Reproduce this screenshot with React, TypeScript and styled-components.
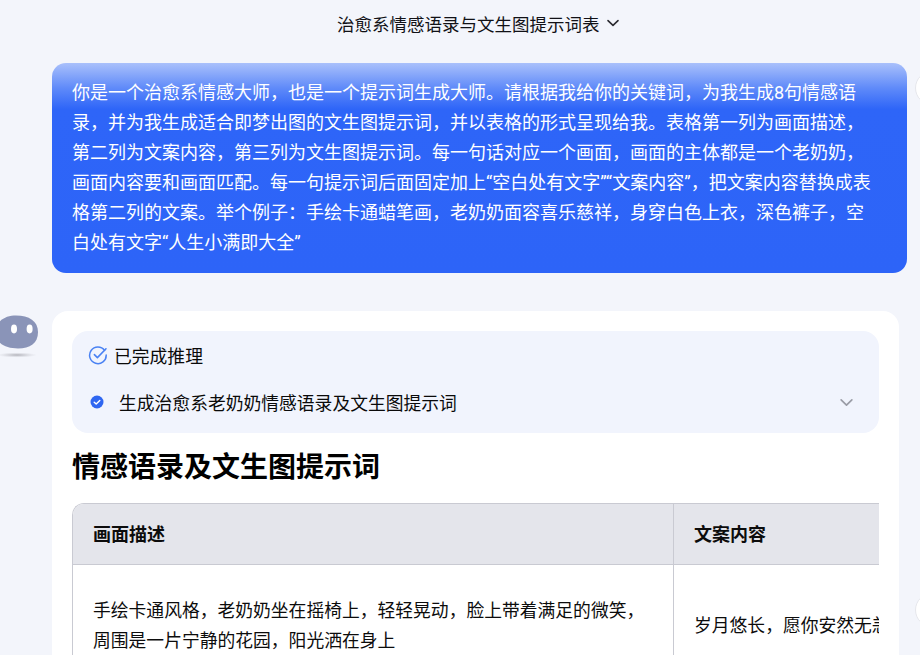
import React from "react";
import styled, { createGlobalStyle } from "styled-components";

const Global = createGlobalStyle`
  html, body { margin: 0; padding: 0; height: 100%; overflow: hidden; background: #f3f5fb; }
  body { font-family: "Liberation Sans", "Noto Sans CJK SC", sans-serif; color: #0a0a0a; }
`;

const Page = styled.div`
  width: 920px;
  height: 655px;
  overflow: hidden;
  position: relative;
  background: #f3f5fb;
`;
const TitleBar = styled.header`
  height: 50px;
  padding-left: 337px;
  display: flex;
  align-items: center;
  gap: 6px;
  font-size: 17.5px;
  color: #111116;
`;
const Title = styled.span`
  line-height: 50px;
`;
const TitleChevron = styled.span`
  display: flex;
  margin-top: -4px;
`;
const Bubble = styled.div`
  margin: 13px 13px 0 52px;
  padding: 15px 27px 15px 20px;
  height: 210px;
  box-sizing: border-box;
  border-radius: 14px;
  background: linear-gradient(180deg, #a9c0fb 0%, #5f8af9 12%, #2e65f8 22%, #2d64f8 100%);
  color: #fff;
  font-family: Roboto, "Noto Sans CJK SC", sans-serif;
  font-size: 18px;
  line-height: 30px;
`;
const Answer = styled.section`
  display: flex;
  margin-top: 38px;
`;
const AvatarCol = styled.div`
  width: 52px;
  flex: none;
  padding-top: 4px;
`;
const Card = styled.div`
  width: 847px;
  height: 400px;
  box-sizing: border-box;
  padding: 20px;
  background: #fff;
  border-radius: 16px;
`;
const Thinking = styled.div`
  height: 102px;
  box-sizing: border-box;
  background: #f1f4fd;
  border-radius: 16px;
  padding: 11px 16px 0 16px;
  font-size: 17.8px;
`;
const ThinkHead = styled.div`
  display: flex;
  align-items: center;
  gap: 6px;
  height: 26px;
  color: #0a0a0a;
`;
const ThinkRow = styled.div`
  display: flex;
  align-items: center;
  margin-top: 21px;
  height: 26px;
  padding-left: 2px;
  color: #0a0a0a;
`;
const ThinkText = styled.span`
  margin-left: 15px;
  flex: 1;
`;
const ChevronWrap = styled.span`
  margin-right: 9px;
  display: flex;
`;
const Heading = styled.h2`
  margin: 15px 0 15px;
  font-size: 28px;
  line-height: 40px;
  font-weight: 700;
  color: #000;
`;
const TableClip = styled.div`
  border: 1px solid #c9cad2;
  border-right: none;
  border-bottom: none;
  border-radius: 12px 0 0 0;
  overflow: hidden;
`;
const Table = styled.div`
  display: grid;
  grid-template-columns: 601px 400px;
  width: 1001px;
`;
const Th = styled.div<{ $last?: boolean }>`
  height: 61px;
  box-sizing: border-box;
  background: #e4e5eb;
  border-bottom: 1px solid #c9cad2;
  border-right: ${(p) => (p.$last ? "none" : "1px solid #c9cad2")};
  padding: 0 0 2px 20px;
  display: flex;
  align-items: center;
  font-size: 18px;
  font-weight: 700;
  color: #0c0c0c;
`;
const Td = styled.div<{ $last?: boolean }>`
  height: 120px;
  box-sizing: border-box;
  border-right: ${(p) => (p.$last ? "none" : "1px solid #c9cad2")};
  padding: 31px 20px 0;
  font-size: 17.8px;
  line-height: 30px;
  color: #0c0c0c;
  white-space: ${(p) => (p.$last ? "nowrap" : "normal")};
`;
const TdInner = styled.span<{ $offset?: boolean }>`
  display: block;
  padding-top: ${(p) => (p.$offset ? "15px" : "0")};
`;
const EdgeCircle = styled.span<{ $top: number }>`
  position: absolute;
  left: 915px;
  top: ${(p) => p.$top}px;
  width: 32px;
  height: 32px;
  border-radius: 50%;
  background: #fff;
  border: 1px solid #e6e7ec;
`;

const Chevron = ({ color, size }: { color: string; size: number }) => (
  <svg width={size} height={size} viewBox="0 0 14 14" fill="none">
    <path d="M2 4.6 7 9.4l5-4.8" stroke={color} strokeWidth="1.6" strokeLinecap="round" strokeLinejoin="round" />
  </svg>
);

const Avatar = () => (
  <svg width="40" height="44" viewBox="0 0 40 44">
    <defs>
      <radialGradient id="sh" cx="50%" cy="50%" r="50%">
        <stop offset="0%" stopColor="#9a9aa2" stopOpacity="0.75" />
        <stop offset="100%" stopColor="#c0c1c8" stopOpacity="0" />
      </radialGradient>
    </defs>
    <path d="M16 0.5C6 0.5-4 5-4 17.5-4 29 6 33.5 18 33.5c12 0 20-5 20-16.5C38 6 29 0.5 16 0.5Z" fill="#8a94b8" />
    <ellipse cx="14" cy="14" rx="3" ry="4.4" fill="#fff" />
    <ellipse cx="29.6" cy="14" rx="3" ry="4.4" fill="#fff" />
    <ellipse cx="17" cy="40" rx="20" ry="2.6" fill="url(#sh)" />
  </svg>
);

const DoneIcon = () => (
  <svg width="20" height="20" viewBox="0 0 20 20" fill="none">
    <path d="M16.6 5.4A8.3 8.3 0 1 0 18.2 10" stroke="#4a82f3" strokeWidth="1.5" strokeLinecap="round" />
    <path d="M6.4 9.6l3 3 8.6-8.8" stroke="#4a82f3" strokeWidth="1.6" strokeLinecap="round" strokeLinejoin="round" />
  </svg>
);

const StepIcon = () => (
  <svg width="14" height="14" viewBox="0 0 14 14" fill="none">
    <circle cx="7" cy="7" r="6.5" fill="#2f66f1" />
    <path d="M4.2 7.2l2 1.9 3.6-3.6" stroke="#fff" strokeWidth="1.4" strokeLinecap="round" strokeLinejoin="round" />
  </svg>
);

export default function App() {
  return (
    <Page>
      <Global />
      <TitleBar>
        <Title>治愈系情感语录与文生图提示词表</Title>
        <TitleChevron>
          <Chevron color="#2a2a30" size={14} />
        </TitleChevron>
      </TitleBar>
      <Bubble>
        你是一个治愈系情感大师，也是一个提示词生成大师。请根据我给你的关键词，为我生成8句情感语录，并为我生成适合即梦出图的文生图提示词，并以表格的形式呈现给我。表格第一列为画面描述，第二列为文案内容，第三列为文生图提示词。每一句话对应一个画面，画面的主体都是一个老奶奶，画面内容要和画面匹配。每一句提示词后面固定加上“空白处有文字”“文案内容”，把文案内容替换成表格第二列的文案。举个例子：手绘卡通蜡笔画，老奶奶面容喜乐慈祥，身穿白色上衣，深色裤子，空白处有文字“人生小满即大全”
      </Bubble>
      <Answer>
        <AvatarCol>
          <Avatar />
        </AvatarCol>
        <Card>
          <Thinking>
            <ThinkHead>
              <DoneIcon />
              已完成推理
            </ThinkHead>
            <ThinkRow>
              <StepIcon />
              <ThinkText>生成治愈系老奶奶情感语录及文生图提示词</ThinkText>
              <ChevronWrap>
                <Chevron color="#9a9ca6" size={15} />
              </ChevronWrap>
            </ThinkRow>
          </Thinking>
          <Heading>情感语录及文生图提示词</Heading>
          <TableClip>
            <Table>
              <Th>画面描述</Th>
              <Th $last>文案内容</Th>
              <Td>
                <TdInner>手绘卡通风格，老奶奶坐在摇椅上，轻轻晃动，脸上带着满足的微笑，周围是一片宁静的花园，阳光洒在身上</TdInner>
              </Td>
              <Td $last>
                <TdInner $offset>岁月悠长，愿你安然无恙</TdInner>
              </Td>
            </Table>
          </TableClip>
        </Card>
      </Answer>
      <EdgeCircle $top={71} />
      <EdgeCircle $top={593} />
    </Page>
  );
}
